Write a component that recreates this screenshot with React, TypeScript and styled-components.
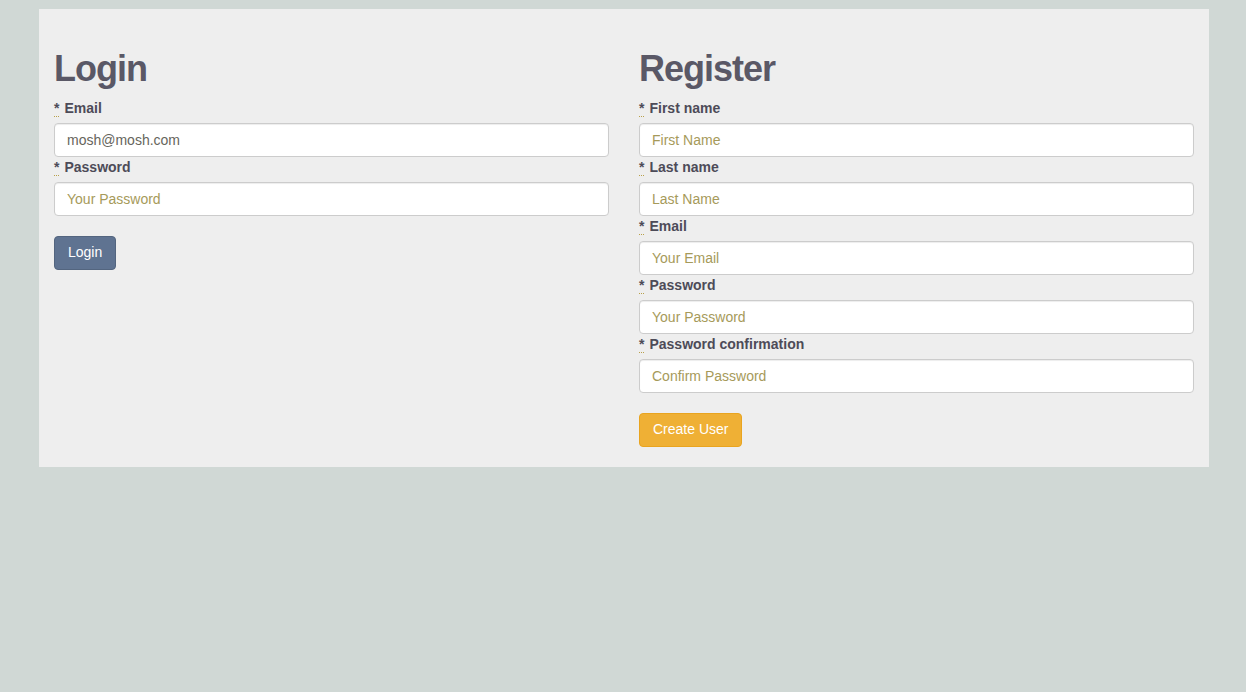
import styled, { createGlobalStyle } from 'styled-components';

const GlobalStyle = createGlobalStyle`
  html, body {
    margin: 0;
    padding: 0;
    background-color: #d0d8d5;
  }
  body {
    font-family: "Liberation Sans", Arial, Helvetica, sans-serif;
    font-size: 14px;
    line-height: 1.428571;
    color: #4d4b58;
  }
  * {
    box-sizing: border-box;
  }
`;

const Page = styled.div`
  padding: 9px 0 0 2px;
  min-height: 692px;
`;

const Panel = styled.div`
  width: 1170px;
  margin: 0 auto;
  padding: 19px 15px 20px;
  background-color: #eeeeee;
  display: grid;
  grid-template-columns: 1fr 1fr;
  column-gap: 30px;
  align-items: start;
`;

const Column = styled.form`
  display: flex;
  flex-direction: column;
`;

const Heading = styled.h1`
  margin: 21px 0 9px;
  font-size: 36px;
  line-height: 1.1;
  font-weight: bold;
  color: #5a5866;
  letter-spacing: -1px;
`;

const Field = styled.div`
  display: flex;
  flex-direction: column;
`;

const Label = styled.label`
  display: block;
  margin-bottom: 5px;
  font-weight: bold;
  line-height: 20px;
  color: #4d4b58;
`;

const Required = styled.abbr`
  text-decoration: none;
  border-bottom: 1px dotted #b8a04a;
  margin-right: 5px;
  cursor: help;
`;

const Input = styled.input`
  display: block;
  width: 100%;
  height: 34px;
  padding: 6px 12px;
  font-family: inherit;
  font-size: 14px;
  line-height: 1.428571;
  color: #66655c;
  background-color: #fff;
  border: 1px solid #cccccc;
  border-radius: 4px;
  box-shadow: inset 0 1px 1px rgba(0, 0, 0, 0.075);
  outline: none;
  &::placeholder {
    color: #a69a5a;
    opacity: 1;
  }
`;

const Button = styled.button<{ variant: 'primary' | 'warning' }>`
  align-self: flex-start;
  margin-top: 20px;
  height: 34px;
  padding: 6px 13px;
  font-family: inherit;
  font-size: 14px;
  line-height: 1.428571;
  color: #fff;
  border-radius: 4px;
  cursor: pointer;
  background-color: ${(p) => (p.variant === 'primary' ? '#5f7391' : '#efb035')};
  border: 1px solid ${(p) => (p.variant === 'primary' ? '#53657f' : '#e9a41f')};
`;

const loginFields = [
  { label: 'Email', type: 'email', placeholder: 'Your Email', value: 'mosh@mosh.com' },
  { label: 'Password', type: 'password', placeholder: 'Your Password' },
];

const registerFields = [
  { label: 'First name', type: 'text', placeholder: 'First Name' },
  { label: 'Last name', type: 'text', placeholder: 'Last Name' },
  { label: 'Email', type: 'email', placeholder: 'Your Email' },
  { label: 'Password', type: 'password', placeholder: 'Your Password' },
  { label: 'Password confirmation', type: 'password', placeholder: 'Confirm Password' },
];

type FieldDef = { label: string; type: string; placeholder: string; value?: string };

const FormField = ({ field, id }: { field: FieldDef; id: string }) => (
  <Field>
    <Label htmlFor={id}>
      <Required title="required">*</Required>
      {field.label}
    </Label>
    <Input
      id={id}
      type={field.type === 'password' ? 'text' : field.type}
      placeholder={field.placeholder}
      defaultValue={field.value}
    />
  </Field>
);

const App = () => {
  return (
    <Page>
      <GlobalStyle />
      <Panel>
        <Column onSubmit={(e) => e.preventDefault()}>
          <Heading>Login</Heading>
          {loginFields.map((f, i) => (
            <FormField key={f.label} field={f} id={`login-${i}`} />
          ))}
          <Button variant="primary">Login</Button>
        </Column>
        <Column onSubmit={(e) => e.preventDefault()}>
          <Heading>Register</Heading>
          {registerFields.map((f, i) => (
            <FormField key={f.label} field={f} id={`user-${i}`} />
          ))}
          <Button variant="warning">Create User</Button>
        </Column>
      </Panel>
    </Page>
  );
};

export default App;
